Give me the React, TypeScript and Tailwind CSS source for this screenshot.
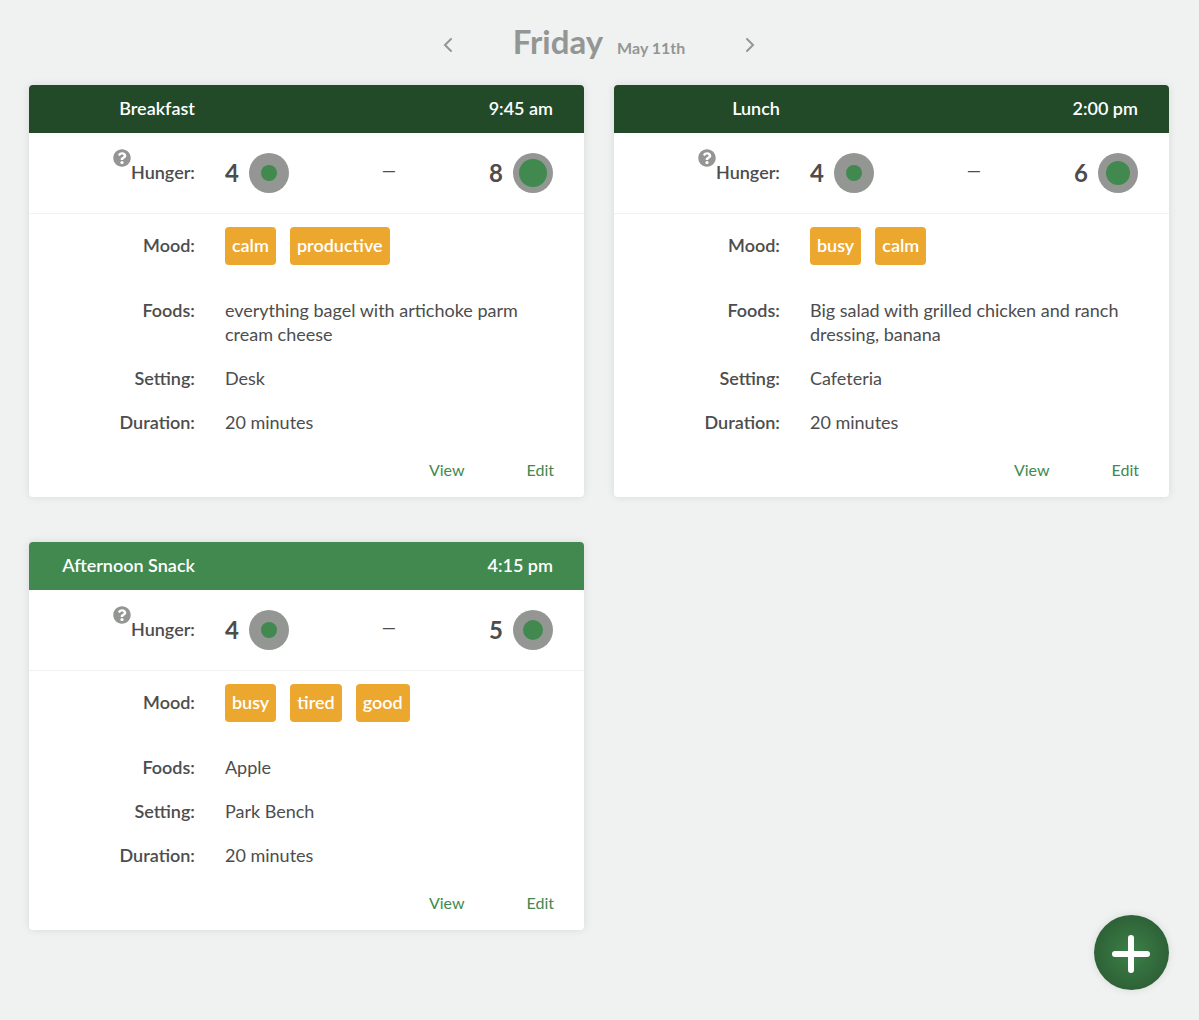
import { FaQuestionCircle } from "react-icons/fa";

type Level = { value: number; dot: string };

type Meal = {
  name: string;
  time: string;
  header: string;
  before: Level;
  after: Level;
  moods: string[];
  foods: string;
  setting: string;
  duration: string;
};

const meals: Meal[] = [
  {
    name: "Breakfast",
    time: "9:45 am",
    header: "bg-[#224a29]",
    before: { value: 4, dot: "size-4" },
    after: { value: 8, dot: "size-7" },
    moods: ["calm", "productive"],
    foods: "everything bagel with artichoke parm cream cheese",
    setting: "Desk",
    duration: "20 minutes",
  },
  {
    name: "Lunch",
    time: "2:00 pm",
    header: "bg-[#224a29]",
    before: { value: 4, dot: "size-4" },
    after: { value: 6, dot: "size-6" },
    moods: ["busy", "calm"],
    foods: "Big salad with grilled chicken and ranch dressing, banana",
    setting: "Cafeteria",
    duration: "20 minutes",
  },
  {
    name: "Afternoon Snack",
    time: "4:15 pm",
    header: "bg-[#41894e]",
    before: { value: 4, dot: "size-4" },
    after: { value: 5, dot: "size-5" },
    moods: ["busy", "tired", "good"],
    foods: "Apple",
    setting: "Park Bench",
    duration: "20 minutes",
  },
];

function Chevron({ d }: { d: string }) {
  return (
    <svg viewBox="0 0 10 16" className="h-4 w-2.5" fill="none" stroke="currentColor" strokeWidth="2" strokeLinecap="round" aria-hidden="true">
      <path d={d} />
    </svg>
  );
}

function HungerLevel({ level }: { level: Level }) {
  return (
    <span className="flex items-center gap-2.5">
      <span className="text-2xl leading-10 font-bold">{level.value}</span>
      <span className="flex size-10 items-center justify-center rounded-full bg-[#949693]">
        <span className={`rounded-full bg-[#41894e] ${level.dot}`} />
      </span>
    </span>
  );
}

function Detail({ label, value }: { label: string; value: string }) {
  return (
    <div className="grid grid-cols-[29.9%_1fr]">
      <dt className="text-right font-semibold">{label}:</dt>
      <dd className="px-[30px]">{value}</dd>
    </div>
  );
}

function MealCard({ meal }: { meal: Meal }) {
  return (
    <article className="overflow-hidden rounded bg-white shadow-[0_0_8px_rgba(0,0,0,0.1)]">
      <header className={`grid h-12 grid-cols-[29.9%_1fr] items-center pb-0.5 font-semibold text-white ${meal.header}`}>
        <h2 className="text-right whitespace-nowrap">{meal.name}</h2>
        <time className="pr-[31px] text-right">{meal.time}</time>
      </header>
      <dl>
        <div className="grid grid-cols-[29.9%_1fr] items-center border-b border-[#f0f2f1] py-5">
          <dt className="flex justify-end pb-0.5 font-semibold">
            <span className="relative">
              <button type="button" aria-label="About hunger levels" className="absolute -top-[11px] right-full text-[#949693]">
                <FaQuestionCircle className="size-[18px]" />
              </button>
              Hunger:
            </span>
          </dt>
          <dd className="flex items-center justify-between pr-[31px] pl-[30px]">
            <HungerLevel level={meal.before} />
            <span className="pb-1.5">—</span>
            <HungerLevel level={meal.after} />
          </dd>
        </div>
        <div className="grid grid-cols-[29.9%_1fr] items-center pt-[13px] pb-[33px]">
          <dt className="pb-0.5 text-right font-semibold">Mood:</dt>
          <dd className="flex flex-wrap gap-3.5 px-[30px]">
            {meal.moods.map((mood) => (
              <span key={mood} className="rounded bg-[#eca72f] px-[7px] pt-1.5 pb-2 font-semibold text-white">
                {mood}
              </span>
            ))}
          </dd>
        </div>
        <div className="flex flex-col gap-5">
          <Detail label="Foods" value={meal.foods} />
          <Detail label="Setting" value={meal.setting} />
          <Detail label="Duration" value={meal.duration} />
        </div>
      </dl>
      <footer className="flex justify-end gap-[62px] px-[30px] pt-6 pb-[15px] text-base leading-6 text-[#41894e]">
        <a href="#view">View</a>
        <a href="#edit">Edit</a>
      </footer>
    </article>
  );
}

export default function App() {
  return (
    <div className="min-h-screen bg-[#f0f2f1] pt-[17px] pr-[30px] pb-[90px] pl-[29px] font-[Lato,sans-serif] text-lg leading-6 text-[#4d4d4d]">
      <nav className="flex items-center justify-center gap-[60px] pb-5 text-[#949693]">
        <button type="button" aria-label="Previous day" className="pt-2">
          <Chevron d="M8 2 2 8l6 6" />
        </button>
        <h1 className="flex items-baseline gap-3.5 font-bold">
          <span className="text-[33px] leading-[48px]">Friday</span>
          <span className="text-base">May 11th</span>
        </h1>
        <button type="button" aria-label="Next day" className="pt-2">
          <Chevron d="m2 2 6 6-6 6" />
        </button>
      </nav>
      <main className="grid grid-cols-1 items-start gap-x-[30px] gap-y-[45px] md:grid-cols-2">
        {meals.map((meal) => (
          <MealCard key={meal.name} meal={meal} />
        ))}
      </main>
      <button
        type="button"
        aria-label="Add meal"
        className="fixed right-[30px] bottom-[30px] flex size-[75px] items-center justify-center rounded-full bg-radial from-[#3c8148] to-[#285530] text-white shadow-[0_0_8px_rgba(0,0,0,0.1)]"
      >
        <svg viewBox="0 0 41 41" className="size-[41px]" fill="none" stroke="currentColor" strokeWidth="6" strokeLinecap="round" aria-hidden="true">
          <path d="M20 6v32M4 22h32" />
        </svg>
      </button>
    </div>
  );
}
